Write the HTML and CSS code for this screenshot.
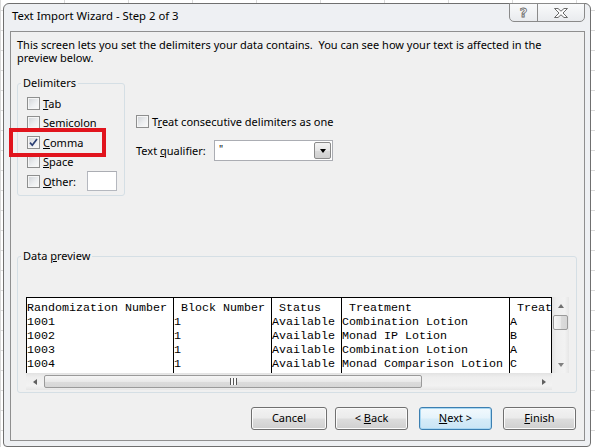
FILE: index.html
```html
<!DOCTYPE html>
<html>
<head>
<meta charset="utf-8">
<title>Text Import Wizard</title>
<link rel="stylesheet" href="styles.css">
</head>
<body>
<div class="window">
  <div class="caption">
    <span class="title">Text Import Wizard - Step 2 of 3</span>
    <div class="cbtns">
      <span class="cbtn help">?</span>
      <span class="cbtn close">
        <svg width="14" height="10" viewBox="0 0 14 10"><polygon points="0.5,0.5 4,0.5 7,3.2 10,0.5 13.5,0.5 9,5 13.5,9.5 10,9.5 7,6.8 4,9.5 0.5,9.5 5,5" fill="#fdfdfd" stroke="#6a6a6a" stroke-width="1"/></svg>
      </span>
    </div>
  </div>
  <div class="client">
    <p class="intro">This screen lets you set the delimiters your data contains.&nbsp; You can see how your text is affected in the<br>preview below.</p>
    <div class="top-row">
      <fieldset class="group delims">
        <legend>Delimiters</legend>
        <div class="delim-list">
          <div class="check-row"><span class="cb"></span><span><u>T</u>ab</span></div>
          <div class="check-row"><span class="cb"></span><span>Semicolon</span></div>
          <div class="check-row"><span class="cb checked"><svg width="11" height="11" viewBox="0 0 11 11"><path d="M2 5.6 L4.3 8.2 L9 2" fill="none" stroke="#2b3f74" stroke-width="1.7"/></svg></span><span><u>C</u>omma</span></div>
          <div class="check-row"><span class="cb"></span><span><u>S</u>pace</span></div>
          <div class="check-row"><span class="cb"></span><span><u>O</u>ther:</span><span class="textbox"></span></div>
        </div>
      </fieldset>
      <div class="options">
        <div class="check-row treat"><span class="cb"></span><span>T<u>r</u>eat consecutive delimiters as one</span></div>
        <div class="qual-row">
          <span class="qlabel">Text <u>q</u>ualifier:</span>
          <div class="combo"><span class="combo-val">"</span><span class="combo-btn"></span></div>
        </div>
      </div>
    </div>
    <fieldset class="group preview">
      <legend>Data <u>p</u>review</legend>
      <div class="preview-body">
        <div class="pgrid">
          <div class="data">
            <div class="col c1"><div>Randomization Number</div><div>1001</div><div>1002</div><div>1003</div><div>1004</div></div>
            <div class="col c2"><div> Block Number</div><div>1</div><div>1</div><div>1</div><div>1</div></div>
            <div class="col c3"><div> Status</div><div>Available</div><div>Available</div><div>Available</div><div>Available</div></div>
            <div class="col c4"><div> Treatment</div><div>Combination Lotion</div><div>Monad IP Lotion</div><div>Combination Lotion</div><div>Monad Comparison Lotion</div></div>
            <div class="col c5"><div> Treat</div><div>A</div><div>B</div><div>A</div><div>C</div></div>
          </div>
          <div class="vscroll">
            <span class="arr up"></span>
            <span class="vthumb"></span>
            <span class="vtrack"></span>
            <span class="arr down"></span>
          </div>
          <div class="hscroll">
            <span class="arr left"></span>
            <span class="hthumb"><span class="grip"></span></span>
            <span class="htrack"></span>
            <span class="arr right"></span>
          </div>
          <div class="corner"></div>
        </div>
      </div>
    </fieldset>
    <div class="buttons">
      <span class="btn cancel">Cancel</span>
      <span class="btn back">&lt; <u>B</u>ack</span>
      <span class="btn next"><u>N</u>ext &gt;</span>
      <span class="btn finish"><u>F</u>inish</span>
    </div>
  </div>
  <div class="highlight"></div>
</div>
</body>
</html>
```

FILE: styles.css
```css
* { box-sizing: border-box; }
html, body { margin: 0; padding: 0; }
body {
  width: 595px;
  height: 447px;
  overflow: hidden;
  background-color: #ffffff;
  background-image:
    linear-gradient(#dadada 1px, transparent 1px),
    linear-gradient(90deg, #dadada 1px, transparent 1px);
  background-size: 64px 20px;
  background-position: 0 10px, 0 0;
  font-family: "Noto Sans", "Open Sans", sans-serif;
  font-size: 11px;
  color: #000;
}

.window {
  position: relative;
  margin: 3px 0 0 3px;
  width: 588px;
  height: 444px;
  border: 1px solid #6f6f6f;
  border-radius: 6px 6px 4px 4px;
  background: #eef0f3;
  padding: 0 5px 0 6px;
}

.caption {
  height: 27px;
  display: flex;
  justify-content: space-between;
  align-items: flex-start;
}
.title {
  padding: 5px 0 0 2px;
  line-height: 14px;
  font-size: 11.3px;
  color: #000;
}
.cbtns {
  display: flex;
  margin-top: -1px;
  height: 19px;
  border: 1px solid #8a8a8a;
  border-radius: 0 0 5px 5px;
  background: linear-gradient(#f9fafb, #e9ebee);
  overflow: hidden;
}
.cbtn {
  display: flex;
  align-items: center;
  justify-content: center;
  height: 100%;
}
.help {
  width: 27px;
  font-family: "DejaVu Sans", sans-serif;
  font-weight: bold;
  font-size: 13px;
  line-height: 1;
  color: #fafafa;
  -webkit-text-stroke: 0.8px #6a6a6a;
}
.close {
  width: 47px;
  border-left: 1px solid #8a8a8a;
}

.client {
  height: 410px;
  border: 1px solid #8f8f8f;
  background: #f0f0f0;
  padding: 0 7px 0 6px;
}
.intro {
  margin: 6px 0 0;
  line-height: 13px;
  white-space: nowrap;
}

.top-row {
  display: flex;
  align-items: flex-start;
  margin-top: 12px;
}

fieldset.group {
  margin: 0;
  padding: 0;
  min-width: 0;
  border: 1px solid #d5dfe5;
  border-radius: 3px;
}
fieldset.group legend {
  margin-left: 3px;
  padding: 0 2px;
  line-height: 14px;
}
fieldset.delims { width: 108px; flex: none; }
.delim-list { padding: 3.25px 7px 4.25px 9px; }

.check-row {
  display: flex;
  align-items: center;
  height: 19.5px;
  white-space: nowrap;
}
.cb {
  flex: none;
  width: 13px;
  height: 13px;
  margin-right: 3px;
  border: 1px solid #8e8f8f;
  background: linear-gradient(135deg, #cfd2d6 0%, #eceef0 55%, #fbfbfb 100%);
  box-shadow: inset 0 0 0 1px #f6f6f6;
  display: flex;
  align-items: center;
  justify-content: center;
}
.textbox {
  margin-left: auto;
  width: 30px;
  height: 20px;
  background: #fff;
  border: 1px solid #b5b8bf;
  border-top-color: #abadb3;
}

.options {
  margin-left: 11px;
  padding-top: 35px;
}
.treat { height: 20px; }
.qual-row {
  display: flex;
  align-items: center;
  margin-top: 9px;
}
.qlabel { width: 78px; white-space: nowrap; }
.combo {
  width: 119px;
  height: 21px;
  display: flex;
  background: #fff;
  border: 1px solid #abadb3;
  padding: 1px;
}
.combo-val {
  flex: 1;
  padding-left: 3px;
  line-height: 15px;
  font-size: 10px;
}
.combo-btn {
  width: 17px;
  border: 1px solid #8a8a8a;
  border-radius: 2px;
  background: linear-gradient(#f4f4f4, #e6e6e6 50%, #dadada 51%, #cfcfcf);
  display: flex;
  align-items: center;
  justify-content: center;
}
.combo-btn::before {
  content: "";
  border-left: 3.5px solid transparent;
  border-right: 3.5px solid transparent;
  border-top: 4px solid #000;
}

fieldset.preview {
  width: 560px;
  margin-top: 53px;
}
.preview-body { padding: 34px 7px 2px 8px; }
.pgrid {
  display: grid;
  grid-template-columns: 526px 17px;
  grid-template-rows: 76px 17px;
}
.data {
  display: flex;
  overflow: hidden;
  background: #fff;
  border: 1px solid #000;
  border-bottom: none;
  font-family: "Liberation Mono", "Courier New", monospace;
  font-size: 11.67px;
  line-height: 14px;
  white-space: pre;
}
.col { flex: none; padding-top: 3px; }
.col + .col { border-left: 1px solid #000; }
.c1 { width: 146px; }
.c2 { width: 98px; }
.c3 { width: 70px; }
.c4 { width: 168px; }
.c5 { flex: 1; min-width: 0; overflow: hidden; }

.vscroll {
  display: flex;
  flex-direction: column;
  background: linear-gradient(90deg, #e2e2e2, #eeeeee 25%, #f2f2f2 75%, #e6e6e6);
}
.hscroll {
  display: flex;
  background: linear-gradient(#e2e2e2, #eeeeee 25%, #f2f2f2 75%, #e6e6e6);
}
.corner { background: #f0f0f0; }
.vtrack, .htrack { flex: 1; }
.arr {
  flex: none;
  width: 17px;
  height: 17px;
  display: flex;
  align-items: center;
  justify-content: center;
}
.arr::before { content: ""; }
.arr.up::before {
  border-left: 3.5px solid transparent;
  border-right: 3.5px solid transparent;
  border-bottom: 4px solid #707070;
}
.arr.down::before {
  border-left: 3.5px solid transparent;
  border-right: 3.5px solid transparent;
  border-top: 4px solid #808080;
}
.arr.left::before {
  border-top: 3.5px solid transparent;
  border-bottom: 3.5px solid transparent;
  border-right: 4px solid #606060;
}
.arr.right::before {
  border-top: 3.5px solid transparent;
  border-bottom: 3.5px solid transparent;
  border-left: 4px solid #606060;
}
.vthumb {
  flex: none;
  height: 15px;
  margin: 1px 1px 0;
  border: 1px solid #9a9a9a;
  border-radius: 2px;
  background: linear-gradient(90deg, #f6f6f6, #e9e9e9 50%, #dcdcdc 51%, #d6d6d6);
}
.hthumb {
  flex: none;
  width: 378px;
  margin: 2px 0 2px 1px;
  border: 1px solid #9a9a9a;
  border-radius: 2px;
  background: linear-gradient(#f6f6f6, #e9e9e9 50%, #dcdcdc 51%, #d6d6d6);
  display: flex;
  align-items: center;
  justify-content: center;
}
.grip {
  width: 7px;
  height: 7px;
  background: repeating-linear-gradient(90deg, #555 0 1px, #fafafa 1px 3px);
}

.buttons {
  display: flex;
  justify-content: flex-end;
  margin: 14px 1px 0 0;
}
.btn {
  width: 73px;
  height: 23px;
  margin-left: 11px;
  border: 1px solid #707070;
  border-radius: 3px;
  background: linear-gradient(#f2f2f2, #ebebeb 48%, #dddddd 52%, #cfcfcf);
  box-shadow: inset 0 0 0 1px #fbfbfb;
  text-align: center;
  line-height: 20px;
  white-space: nowrap;
}
.btn.cancel { width: 76px; }
.btn.back { margin-left: 8px; }
.btn.next {
  border-color: #3c7fb1;
  background: linear-gradient(#f2f9fd, #e5f3fb 48%, #d6ecf8 52%, #cae5f5);
  box-shadow: inset 0 0 0 1px #a8d7f2;
}

.highlight {
  position: absolute;
  left: 5px;
  top: 124px;
  width: 97px;
  height: 29px;
  border: 4px solid #e1141d;
}
```
